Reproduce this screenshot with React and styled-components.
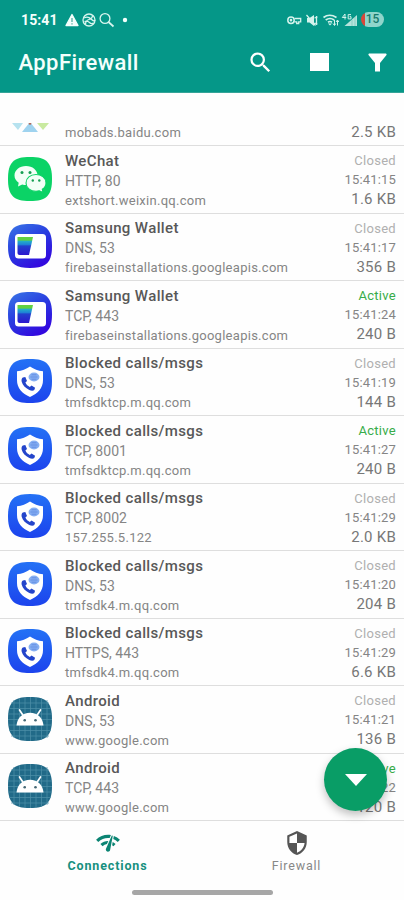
import React from 'react';
import styled, { createGlobalStyle } from 'styled-components';
import { MdSearch, MdNetworkCheck, MdSecurity } from 'react-icons/md';

const GlobalStyle = createGlobalStyle`
  * { box-sizing: border-box; }
  body { margin: 0; background: #fff; }
`;

const Screen = styled.div`
  width: 404px;
  height: 900px;
  display: flex;
  flex-direction: column;
  position: relative;
  overflow: hidden;
  background: #fefefe;
  font-family: Roboto, "Liberation Sans", sans-serif;
`;

const Header = styled.header`
  height: 93px;
  flex: none;
  background: #059788;
  color: #f4fffc;
  border-bottom: 1px solid #35a498;
`;

const StatusBar = styled.div`
  height: 38px;
  padding: 1px 20px 0 21px;
  display: flex;
  align-items: center;
  justify-content: space-between;
`;

const StatusGroup = styled.div`
  display: flex;
  align-items: center;
  gap: ${(p) => p.$gap}px;
  svg { display: block; }
`;

const Clock = styled.span`
  font-size: 14px;
  font-weight: 700;
  letter-spacing: 0.1px;
  width: 40px;
`;

const Battery = styled.span`
  width: 23px;
  height: 15px;
  border-radius: 8px;
  background: linear-gradient(90deg, #d8483a 0 4px, #8fd5cb 4px);
  color: #16796d;
  font-size: 12px;
  font-weight: 500;
  line-height: 15.5px;
  text-align: center;
`;

const Toolbar = styled.div`
  height: 48px;
  padding: 0 0 0 18.5px;
  display: flex;
  align-items: center;
`;

const Title = styled.h1`
  margin: 0;
  flex: 1;
  font-size: 22px;
  font-weight: 500;
  letter-spacing: 0.42px;
`;

const Actions = styled.div`
  display: flex;
  align-items: center;
  svg { display: block; }
`;

const Action = styled.button`
  width: ${(p) => p.$w}px;
  height: 28px;
  padding: 0;
  border: 0;
  background: none;
  color: #fff;
  display: flex;
  align-items: center;
  justify-content: center;
`;

const List = styled.main`
  margin-top: 30px;
  height: 698px;
  flex: none;
  overflow: hidden;
  display: flex;
  flex-direction: column;
  justify-content: flex-end;
`;

const Row = styled.div`
  height: 67.5px;
  flex: none;
  padding: 0 8px 0 7.5px;
  border-bottom: 1px solid #dedede;
  display: grid;
  grid-template-columns: 57.5px 1fr auto;
`;

const IconCell = styled.div`
  padding-top: 10.5px;
  svg { display: block; }
`;

const Lines = styled.div`
  padding-top: ${(p) => (p.$end ? 4 : 4.5)}px;
  display: flex;
  flex-direction: column;
  align-items: ${(p) => (p.$end ? 'flex-end' : 'flex-start')};
  white-space: nowrap;
`;

const Name = styled.div`
  font-size: 15px;
  line-height: 20px;
  font-weight: 500;
  letter-spacing: 0.37px;
  color: #585858;
`;

const Protocol = styled.div`
  font-size: 14px;
  line-height: 21px;
  letter-spacing: 0.05px;
  color: #858585;
`;

const Host = styled.div`
  font-size: 13px;
  line-height: 18px;
  letter-spacing: 0.27px;
  color: #858585;
`;

const Status = styled.div`
  font-size: 13px;
  line-height: 21px;
  letter-spacing: 0.3px;
  color: ${(p) => (p.$active ? '#37ac49' : '#b0b0b0')};
`;

const Time = styled.div`
  font-size: 13px;
  line-height: 18px;
  letter-spacing: 0.18px;
  color: #858585;
`;

const Size = styled.div`
  font-size: 15px;
  line-height: 20px;
  letter-spacing: 0.25px;
  color: #777;
`;

const BottomNav = styled.nav`
  height: 54px;
  flex: none;
  padding: 0 13px;
  display: grid;
  grid-template-columns: 1fr 1fr;
`;

const Tab = styled.div`
  padding-top: 9px;
  display: flex;
  flex-direction: column;
  align-items: center;
  color: ${(p) => (p.$on ? '#0b8473' : '#555')};
  svg { display: block; height: 26px; }
`;

const TabLabel = styled.span`
  font-size: 12.5px;
  line-height: 20px;
  font-weight: ${(p) => (p.$on ? 700 : 400)};
  letter-spacing: ${(p) => (p.$on ? 0.85 : 0.8)}px;
  color: ${(p) => (p.$on ? '#16907f' : '#888')};
`;

const HomeBar = styled.div`
  width: 141px;
  height: 5px;
  margin: 15px auto 0;
  border-radius: 3px;
  background: #a6a6a6;
`;

const Fab = styled.button`
  position: absolute;
  left: 324px;
  top: 748px;
  width: 63px;
  height: 63px;
  border: 0;
  padding: 0;
  border-radius: 50%;
  background: #099d66;
  box-shadow: 0 4px 8px rgba(0, 0, 0, 0.25);
  display: flex;
  align-items: center;
  justify-content: center;
`;

const SQUIRCLE = 'M22 0C38.5 0 44 5.5 44 22S38.5 44 22 44 0 38.5 0 22 5.5 0 22 0Z';

const MapsIcon = () => (
  <svg width="44" height="44" viewBox="0 0 44 44">
    <path d="M4 34h11l-5 7z" fill="#b6e2ef" />
    <path d="M14 43l8-10 8 10z" fill="#9fd3ef" />
    <path d="M29 34h12l-6 7z" fill="#c9eaa0" />
    <circle cx="22" cy="34.5" r="1.3" fill="#b06b5c" />
  </svg>
);

const WeChatIcon = () => (
  <svg width="44" height="44" viewBox="0 0 44 44">
    <path d={SQUIRCLE} fill="#0bd366" />
    <path d="M18 9C11.500 9 6.500 13.200 6.500 18.500c0 3 1.600 5.500 4.200 7.200L10 29.500l4.200-2.100c1.200.4 2.500.6 3.800.6 6.500 0 11.500-4.200 11.500-9.500S24.500 9 18 9z" fill="#f2fff7" />
    <path d="M28 17.500c-5.700 0-10 3.700-10 8.400s4.300 8.400 10 8.400c1.200 0 2.300-.2 3.300-.5l3.700 1.700-.7-3.200c2.300-1.600 3.700-3.800 3.700-6.400 0-4.700-4.300-8.400-10-8.400z" fill="#f2fff7" stroke="#0bd366" strokeWidth="1.100" />
    <g fill="#159e52">
      <circle cx="14" cy="15.500" r="1.500" />
      <circle cx="22" cy="15.500" r="1.500" />
      <circle cx="24.800" cy="23.500" r="1.200" />
      <circle cx="31.300" cy="23.500" r="1.200" />
    </g>
  </svg>
);

const WalletIcon = () => (
  <svg width="44" height="44" viewBox="0 0 44 44">
    <defs>
      <linearGradient id="walletBg" x1="0" y1="0" x2="0.6" y2="1">
        <stop offset="0" stopColor="#3a78e6" />
        <stop offset="0.5" stopColor="#293fe0" />
        <stop offset="1" stopColor="#3209df" />
      </linearGradient>
      <linearGradient id="walletCard" x1="0" y1="0" x2="0" y2="1">
        <stop offset="0.17" stopColor="#62d140" />
        <stop offset="0.24" stopColor="#22acc9" />
        <stop offset="0.42" stopColor="#1e83d6" />
        <stop offset="0.5" stopColor="#2340cd" />
        <stop offset="1" stopColor="#2b17cf" />
      </linearGradient>
    </defs>
    <path d={SQUIRCLE} fill="url(#walletBg)" />
    <rect x="7" y="10" width="31" height="24.500" rx="3.500" fill="#fff" />
    <path d="M9.500 13H25l-4 18h-9.500q-2 0-2-2z" fill="url(#walletCard)" />
  </svg>
);

const BlockedIcon = () => (
  <svg width="44" height="44" viewBox="0 0 44 44">
    <defs>
      <linearGradient id="blockedBg" x1="0" y1="0" x2="0" y2="1">
        <stop offset="0" stopColor="#2471f5" />
        <stop offset="1" stopColor="#1c43ed" />
      </linearGradient>
    </defs>
    <path d={SQUIRCLE} fill="url(#blockedBg)" />
    <path d="M22 7.500c4 2.800 8 4.300 13 4.700V21c0 8-5 13.500-13 17C14 34.500 9 29 9 21v-8.800c5-.4 9-1.900 13-4.700z" fill="#fff" />
    <path d="M14.800 18.500l2.500-.5 1.700 4-1.600 1.500c1 2.300 2.400 3.400 4.400 4.400l1.700-1.400 3.600 2.200-.8 2.200c-1 1-3 1-5 0-4-1.800-6.600-4.500-7.600-8.100-.4-2-.1-3.400 1.100-4.300z" fill="#2445cb" />
    <ellipse cx="26" cy="18" rx="5.500" ry="4.400" fill="#86aff2" />
    <path d="M22.500 18h7M23.500 15.800h5M23.500 20.200h5" stroke="#5580dd" strokeWidth="0.700" />
  </svg>
);

const AndroidIcon = () => (
  <svg width="44" height="44" viewBox="0 0 44 44">
    <path d={SQUIRCLE} fill="#216a88" />
    <path d="M6 3v38M11.500 1v42M17 0v44M22.500 0v44M28 0v44M33.500 1v42M39 3v38M3 6h38M1 11.500h42M0 17h44M0 22.500h44M0 28h44M1 33.500h42M3 39h38" stroke="#4f91a9" strokeWidth="0.700" fill="none" />
    <path d="M11.500 13l4 6M32.500 13l-4 6" stroke="#fff" strokeWidth="1.700" strokeLinecap="round" />
    <path d="M8.500 28.500C9.200 20.500 14.500 15.700 22 15.700s12.800 4.800 13.500 12.800z" fill="#fff" />
    <circle cx="16.700" cy="23.200" r="1.300" fill="#456774" />
    <circle cx="27.500" cy="23.200" r="1.300" fill="#456774" />
  </svg>
);

const ICONS = { maps: MapsIcon, wechat: WeChatIcon, wallet: WalletIcon, blocked: BlockedIcon, android: AndroidIcon };

const CONNECTIONS = [
  ['maps', '', '', 'mobads.baidu.com', '', '', '2.5 KB'],
  ['wechat', 'WeChat', 'HTTP, 80', 'extshort.weixin.qq.com', 'Closed', '15:41:15', '1.6 KB'],
  ['wallet', 'Samsung Wallet', 'DNS, 53', 'firebaseinstallations.googleapis.com', 'Closed', '15:41:17', '356 B'],
  ['wallet', 'Samsung Wallet', 'TCP, 443', 'firebaseinstallations.googleapis.com', 'Active', '15:41:24', '240 B'],
  ['blocked', 'Blocked calls/msgs', 'DNS, 53', 'tmfsdktcp.m.qq.com', 'Closed', '15:41:19', '144 B'],
  ['blocked', 'Blocked calls/msgs', 'TCP, 8001', 'tmfsdktcp.m.qq.com', 'Active', '15:41:27', '240 B'],
  ['blocked', 'Blocked calls/msgs', 'TCP, 8002', '157.255.5.122', 'Closed', '15:41:29', '2.0 KB'],
  ['blocked', 'Blocked calls/msgs', 'DNS, 53', 'tmfsdk4.m.qq.com', 'Closed', '15:41:20', '204 B'],
  ['blocked', 'Blocked calls/msgs', 'HTTPS, 443', 'tmfsdk4.m.qq.com', 'Closed', '15:41:29', '6.6 KB'],
  ['android', 'Android', 'DNS, 53', 'www.google.com', 'Closed', '15:41:21', '136 B'],
  ['android', 'Android', 'TCP, 443', 'www.google.com', 'Active', '15:41:22', '120 B'],
];

function Connection({ data }) {
  const [icon, name, protocol, host, status, time, size] = data;
  const AppIcon = ICONS[icon];
  return (
    <Row>
      <IconCell><AppIcon /></IconCell>
      <Lines>
        <Name>{name || '\u00a0'}</Name>
        <Protocol>{protocol || '\u00a0'}</Protocol>
        <Host>{host}</Host>
      </Lines>
      <Lines $end>
        <Status $active={status === 'Active'}>{status || '\u00a0'}</Status>
        <Time>{time || '\u00a0'}</Time>
        <Size>{size}</Size>
      </Lines>
    </Row>
  );
}

const NoticeIcons = () => (
  <svg width="67" height="16" viewBox="0 0 67 16" fill="none" stroke="#d8f5ee" strokeWidth="1.300">
    <path d="M9 2.500l6 11H3z" fill="#f4fffc" stroke="#f4fffc" strokeLinejoin="round" />
    <path d="M9 6v4M9 11.200v1.300" stroke="#4aa99c" strokeWidth="1.200" />
    <circle cx="26" cy="8" r="6" />
    <path d="M21 6q4-2 7 1t4 1M22.500 12.500q0-4 3.500-5t3.500-4M21.500 9.500q3-1 5 1t4 .5" />
    <circle cx="42" cy="6.500" r="4.900" />
    <path d="M45.500 10l5 4.500" strokeWidth="1.700" />
    <circle cx="62" cy="8" r="2.200" fill="#f4fffc" stroke="none" />
  </svg>
);

const SignalIcons = () => (
  <svg width="71" height="16" viewBox="0 0 71 16" fill="none" stroke="#d4f3ec" strokeWidth="1.300">
    <circle cx="4" cy="8.200" r="3.200" strokeWidth="1.500" />
    <circle cx="4" cy="8.200" r="0.700" />
    <path d="M7.500 6.500h6.200v3.300h-2v1.700h-2V9.800H7.500" />
    <path d="M20 6h2.500L27 3v11l-4.500-3.500H20z" fill="#d4f3ec" stroke="none" />
    <path d="M19.500 3l9 10.500M29.500 4v9M27.500 6l3-1M27.500 11l3 1" />
    <path d="M36.500 5.500q6-4.500 13 0M38.700 8q4.300-3 8.500 0M41 10.200q2-1.400 4 0" strokeWidth="1.700" />
    <path d="M43 13.500l-2-2h4z" fill="#d4f3ec" stroke="none" />
    <path d="M47.500 8v5M50.500 13.500v-5M46 11.500l1.500 2 1.300-2M49 10l1.500-2 1.300 2" strokeWidth="1" />
    <path d="M58 2l-2.700 3.500h4M58 2v5.500M64 2.600h-2.800v4.300H64V4.700h-1.400" strokeWidth="1" />
    <path d="M70 3v11H57.500z" fill="#b5e3dc" stroke="none" />
    <path d="M65 8v6M68 5v9" stroke="#75c5ba" strokeWidth="0.700" />
  </svg>
);

export default function App() {
  return (
    <>
      <GlobalStyle />
      <Screen>
        <Header>
          <StatusBar>
            <StatusGroup $gap={2}>
              <Clock>15:41</Clock>
              <NoticeIcons />
            </StatusGroup>
            <StatusGroup $gap={3}>
              <SignalIcons />
              <Battery>15</Battery>
            </StatusGroup>
          </StatusBar>
          <Toolbar>
            <Title>AppFirewall</Title>
            <Actions>
              <Action $w={55} aria-label="Search"><MdSearch size={27} /></Action>
              <Action $w={63} aria-label="Stop">
                <svg width="19" height="18"><rect width="19" height="18" fill="#fff" /></svg>
              </Action>
              <Action $w={53} aria-label="Filter">
                <svg width="19" height="19" viewBox="0 0 19 19">
                  <path d="M1 .5h17q1 .5.500 1.500L12 10v8.500H7V10L.5 2Q0 1 1 .5z" fill="#fff" />
                </svg>
              </Action>
            </Actions>
          </Toolbar>
        </Header>
        <List>
          {CONNECTIONS.map((data, i) => <Connection key={i} data={data} />)}
        </List>
        <BottomNav>
          <Tab $on>
            <MdNetworkCheck size={26} />
            <TabLabel $on>Connections</TabLabel>
          </Tab>
          <Tab>
            <MdSecurity size={26} />
            <TabLabel>Firewall</TabLabel>
          </Tab>
        </BottomNav>
        <HomeBar />
        <Fab aria-label="Scroll down">
          <svg width="22" height="12" viewBox="0 0 22 12"><path d="M0 0h22L11 12z" fill="#fff" /></svg>
        </Fab>
      </Screen>
    </>
  );
}
